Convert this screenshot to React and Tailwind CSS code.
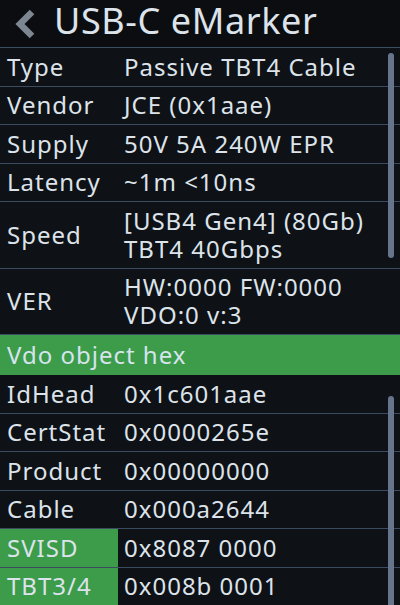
import React from 'react';

const topRows = [
  { label: 'Type', value: ['Passive TBT4 Cable'] },
  { label: 'Vendor', value: ['JCE (0x1aae)'] },
  { label: 'Supply', value: ['50V 5A 240W EPR'] },
  { label: 'Latency', value: ['~1m <10ns'] },
  { label: 'Speed', value: ['[USB4 Gen4] (80Gb)', 'TBT4 40Gbps'] },
  { label: 'VER', value: ['HW:0000 FW:0000', 'VDO:0 v:3'] },
];

const hexRows = [
  { label: 'IdHead', value: '0x1c601aae' },
  { label: 'CertStat', value: '0x0000265e' },
  { label: 'Product', value: '0x00000000' },
  { label: 'Cable', value: '0x000a2644' },
  { label: 'SVISD', value: '0x8087 0000', hl: true },
  { label: 'TBT3/4', value: '0x008b 0001', hl: true },
];

const Row = ({ label, value, tall, hl }) => (
  <div
    className={`flex border-b border-[#3b4b60] ${tall ? 'h-[66.5px]' : 'h-[38.5px]'}`}
  >
    <div
      className={`w-[118px] shrink-0 flex items-center pl-[7px] ${hl ? 'bg-[#3c9c4a]' : ''}`}
    >
      {label}
    </div>
    <div className="flex flex-col justify-center pl-[6px] leading-[28px]">
      {value.map((v) => (
        <span key={v} className="block whitespace-nowrap">{v}</span>
      ))}
    </div>
  </div>
);

const App = () => {
  return (
    <div
      className="w-[400px] h-[605px] overflow-hidden bg-[#0e1115] text-[#dde3ea] text-[24px] tracking-[1px]"
      style={{ fontFamily: '"Noto Sans", sans-serif' }}
    >
      <div className="h-[48px] flex items-start border-b border-[#3b4b60] bg-[#0b0d10]">
        <svg width="30" height="30" viewBox="0 0 30 30" className="ml-[10px] mr-[14px] mt-[9px]">
          <path d="M22 3 L10 15 L22 27" fill="none" stroke="#7d8791" strokeWidth="6.5" />
        </svg>
        <span className="text-[36px] leading-[40px] pt-[1px] tracking-[0.6px]">USB-C eMarker</span>
      </div>

      <div className="relative">
        {topRows.map((r) => (
          <Row key={r.label} label={r.label} value={r.value} tall={r.value.length > 1} />
        ))}
        <div className="absolute right-[6px] top-[5px] w-[6px] h-[205px] rounded-full bg-[#66748c]" />
      </div>

      <div className="h-[40px] flex items-center pl-[7px] bg-[#3c9c4a] text-[#d7e4ee]">
        Vdo object hex
      </div>

      <div className="relative">
        {hexRows.map((r) => (
          <Row key={r.label} label={r.label} value={[r.value]} hl={r.hl} />
        ))}
        <div className="absolute right-[6px] top-[21px] w-[6px] h-[220px] rounded-full bg-[#66748c]" />
      </div>
    </div>
  );
};

export default App;
